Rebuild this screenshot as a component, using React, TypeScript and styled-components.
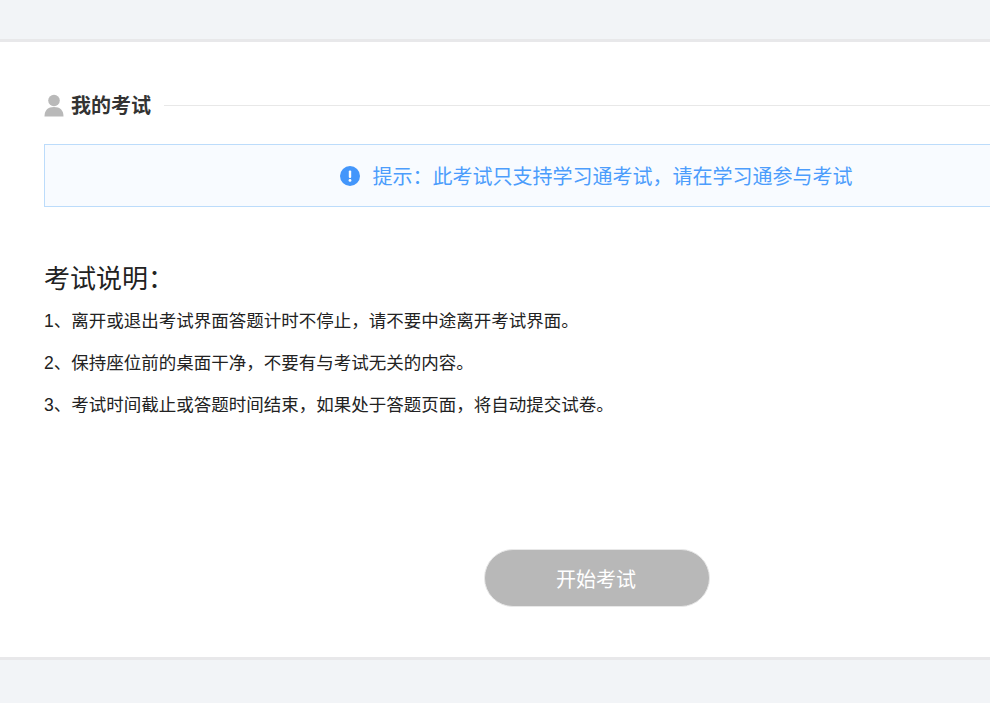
import React from 'react';
import styled, { createGlobalStyle } from 'styled-components';

const GlobalStyle = createGlobalStyle`
  html, body {
    margin: 0;
    padding: 0;
    height: 100%;
    overflow: hidden;
    background: #f2f4f7;
    font-family: "Liberation Sans", "Noto Sans CJK SC", sans-serif;
  }
`;

const Page = styled.div`
  width: 990px;
  height: 703px;
  overflow: hidden;
  padding-top: 39px;
  box-sizing: border-box;
`;

const Card = styled.main`
  width: 1194px;
  height: 621px;
  box-sizing: border-box;
  background: #fff;
  border-top: 3px solid #e8e8ea;
  border-bottom: 3px solid #e8e8ea;
  padding: 51px 44px 0;
`;

const TitleRow = styled.div`
  display: flex;
  align-items: center;
  height: 26px;
`;

const TitleText = styled.h2`
  margin: 0 13px 0 7px;
  font-size: 20px;
  line-height: 26px;
  font-weight: 700;
  color: #333;
  white-space: nowrap;
`;

const TitleLine = styled.div`
  flex: 1;
  height: 1px;
  margin-bottom: 2px;
  background: #e8e8e8;
`;

const Notice = styled.div`
  margin-top: 25px;
  height: 63px;
  box-sizing: border-box;
  border: 1px solid #bcdcfb;
  background: #f8fbff;
  display: flex;
  align-items: center;
  justify-content: center;
  gap: 13px;
  padding-right: 2px;
  color: #4c9dfc;
  font-size: 20px;
`;

const RulesTitle = styled.h3`
  margin: 55px 0 0;
  font-size: 26px;
  line-height: 34px;
  font-weight: 400;
  color: #222;
`;

const RuleList = styled.div`
  margin-top: 4px;
`;

const Rule = styled.p`
  margin: 0;
  font-size: 17.5px;
  line-height: 42px;
  color: #222;
`;

const Actions = styled.div`
  display: flex;
  justify-content: center;
  margin-top: 123px;
`;

const StartButton = styled.button`
  width: 226px;
  height: 58px;
  border: 1px solid #e8e8e8;
  border-radius: 29px;
  background: #b8b8b8;
  color: #fff;
  font-family: inherit;
  font-size: 20px;
  padding: 0 2px 0 0;
`;

const rules = [
  '1、离开或退出考试界面答题计时不停止，请不要中途离开考试界面。',
  '2、保持座位前的桌面干净，不要有与考试无关的内容。',
  '3、考试时间截止或答题时间结束，如果处于答题页面，将自动提交试卷。',
];

const PersonIcon = () => (
  <svg width="20" height="24" viewBox="0 0 20 24">
    <circle cx="10" cy="6.5" r="5.8" fill="#b9b9b9" />
    <path d="M0.5 22.5 C0.5 16 4 13 10 13 C16 13 19.5 16 19.5 22.5 Z" fill="#b9b9b9" />
  </svg>
);

const AlertIcon = () => (
  <svg width="20" height="20" viewBox="0 0 20 20">
    <circle cx="10" cy="10" r="10" fill="#4396fb" />
    <rect x="8.8" y="4.5" width="2.4" height="7.5" rx="1" fill="#fff" />
    <circle cx="10" cy="14.4" r="1.4" fill="#fff" />
  </svg>
);

export default function App() {
  return (
    <Page>
      <GlobalStyle />
      <Card>
        <TitleRow>
          <PersonIcon />
          <TitleText>我的考试</TitleText>
          <TitleLine />
        </TitleRow>
        <Notice>
          <AlertIcon />
          <span>提示：此考试只支持学习通考试，请在学习通参与考试</span>
        </Notice>
        <RulesTitle>考试说明：</RulesTitle>
        <RuleList>
          {rules.map((rule) => (
            <Rule key={rule}>{rule}</Rule>
          ))}
        </RuleList>
        <Actions>
          <StartButton>开始考试</StartButton>
        </Actions>
      </Card>
    </Page>
  );
}
